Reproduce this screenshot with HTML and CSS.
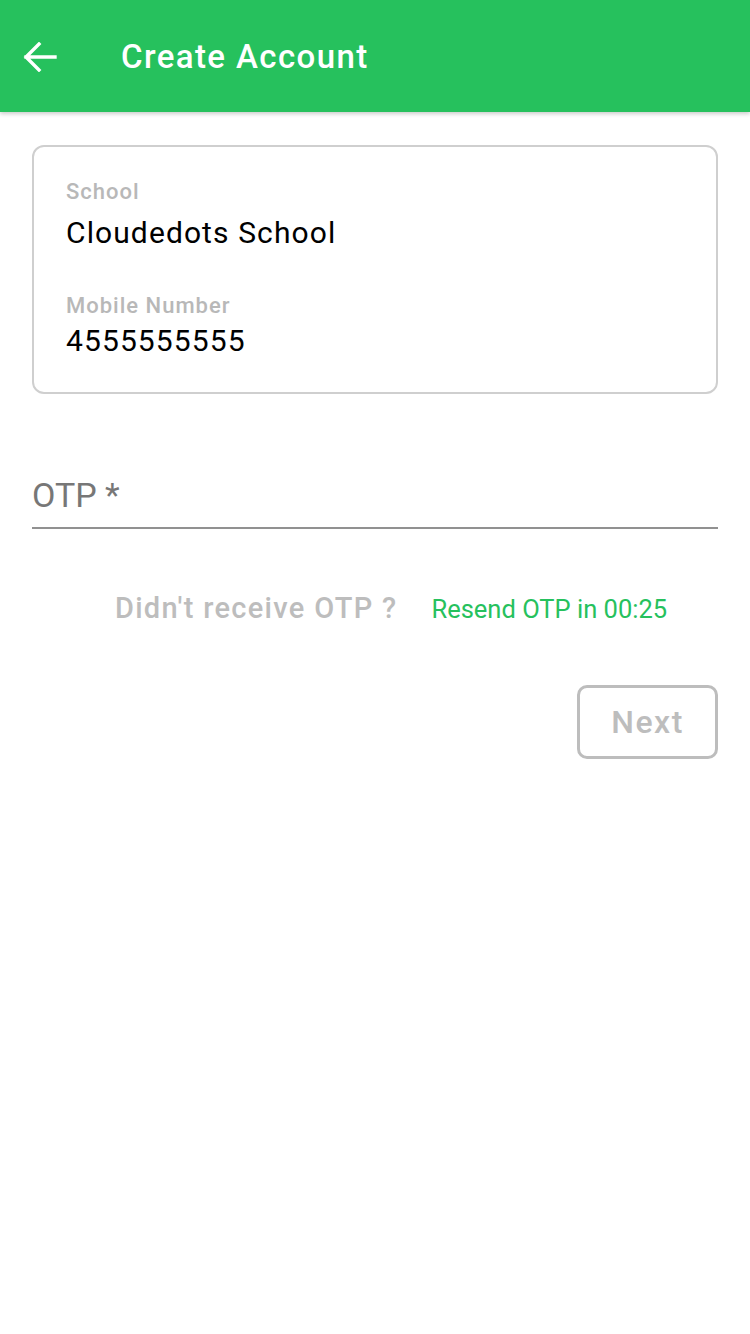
FILE: index.html
```html
<!DOCTYPE html>
<html>
<head>
<meta charset="utf-8">
<link rel="stylesheet" href="styles.css">
</head>
<body>
<header class="appbar">
  <svg class="back" width="34" height="30" viewBox="0 0 34 30"><path d="M32 15H3M16 2L3 15l13 13" fill="none" stroke="#fff" stroke-width="3.4" stroke-linecap="square"/></svg>
  <h1 class="title">Create Account</h1>
</header>
<main class="content">
  <section class="card">
    <div class="field">
      <div class="label">School</div>
      <div class="value">Cloudedots School</div>
    </div>
    <div class="field field2">
      <div class="label">Mobile Number</div>
      <div class="value">4555555555</div>
    </div>
  </section>
  <div class="otp">
    <div class="otp-label">OTP *</div>
  </div>
  <div class="resend-row">
    <span class="didnt">Didn't receive OTP ?</span>
    <span class="resend">Resend OTP in 00:25</span>
  </div>
  <div class="actions">
    <button class="next">Next</button>
  </div>
</main>
</body>
</html>
```
FILE: styles.css
```css
* { box-sizing: border-box; }
body { margin: 0; font-family: Roboto, "Liberation Sans", sans-serif; background: #fff; }
.appbar {
  height: 112px; background: #26c15d; display: flex; align-items: center;
  padding-left: 23px; box-shadow: 0 2px 4px rgba(0,0,0,0.2);
}
.back { display: block; margin-top: 2px; }
.title { margin: 0 0 0 64px; color: #fff; font-size: 33px; font-weight: 500; letter-spacing: 1.4px; }
.content { padding: 33px 32px 0 32px; }
.card {
  border: 2px solid #cfcfcf; border-radius: 12px; padding: 32px 32px 32px 32px; height: 249px;
}
.label { color: #b8b8b8; font-size: 22px; font-weight: 500; line-height: 26px; letter-spacing: 1px; }
.value { color: #000; font-size: 30px; line-height: 36px; margin-top: 10px; letter-spacing: 1.1px; }
.field2 { margin-top: 42px; }
.field2 .value { margin-top: 4px; }
.otp { margin-top: 78px; border-bottom: 2px solid #919191; height: 57px; }
.otp-label { color: #777; font-size: 34px; line-height: 40px; padding-top: 3px; }
.resend-row { display: flex; justify-content: center; align-items: baseline; margin-top: 62px; gap: 34px; padding-left: 32px; }
.didnt { color: #bdbdbd; font-size: 29px; font-weight: 500; letter-spacing: 1.3px; }
.resend { color: #26c15d; font-size: 25.5px; }
.actions { display: flex; justify-content: flex-end; margin-top: 60px; }
.next {
  width: 141px; height: 74px; border: 3px solid #bdbdbd; border-radius: 10px; background: #fff;
  color: #bdbdbd; font-family: Roboto, sans-serif; font-size: 32px; font-weight: 500; padding: 0; letter-spacing: 1.5px;
}
```
